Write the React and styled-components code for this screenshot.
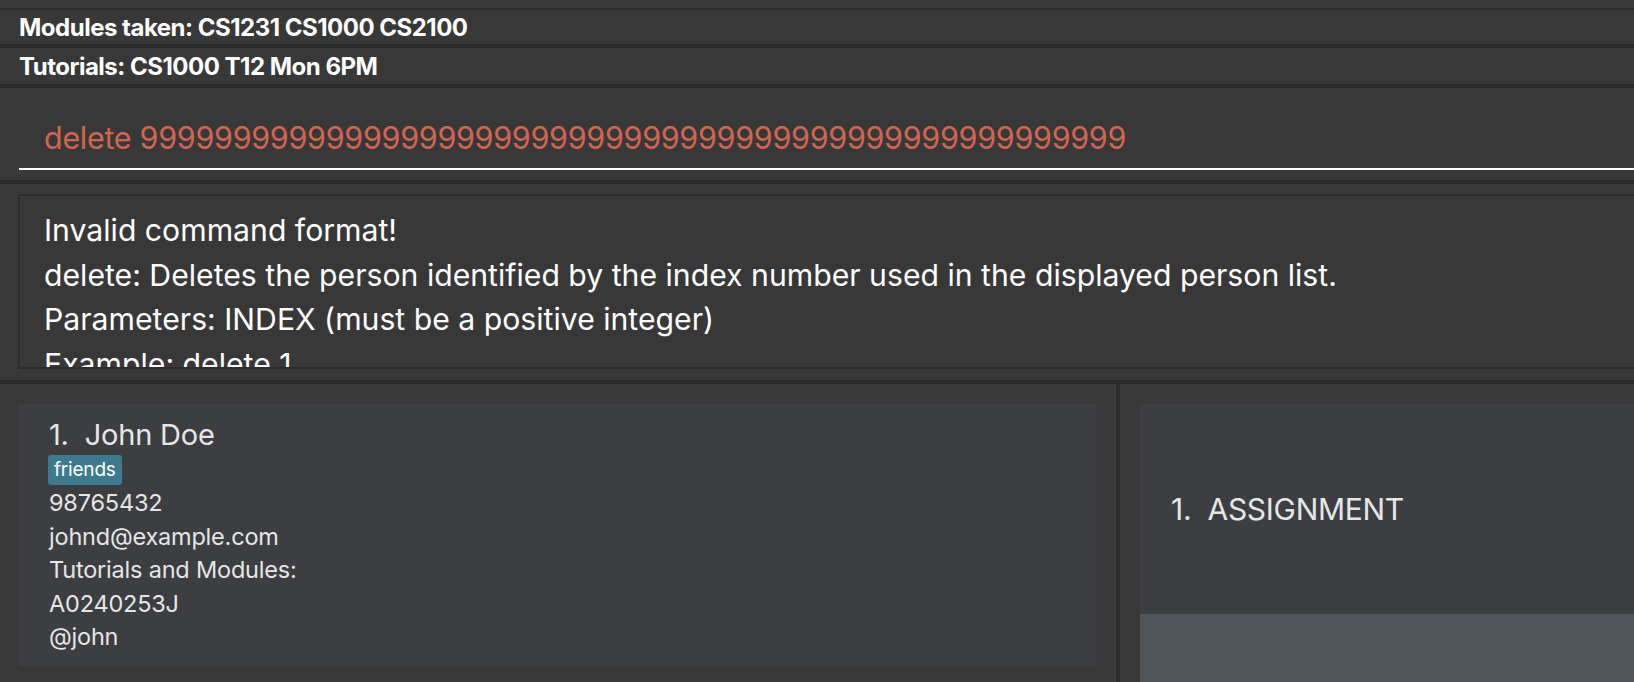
import React from "react";
import styled, { createGlobalStyle } from "styled-components";

const GlobalStyle = createGlobalStyle`
  html, body {
    margin: 0;
    padding: 0;
    background: #383838;
    overflow: hidden;
  }
  body {
    font-family: Inter, "Noto Sans", sans-serif;
  }
`;

const Page = styled.div`
  width: 1634px;
  height: 682px;
  display: flex;
  flex-direction: column;
  background: #383838;
  overflow: hidden;
`;

// thin dark separator between the stacked panes
const Rule = styled.div`
  height: ${(p) => p.size || 4}px;
  background: #2b2b2b;
  flex: none;
`;

const TopStrip = styled.div`
  height: 8px;
  flex: none;
`;

// header rows (modules / tutorials)
const InfoRow = styled.div`
  height: ${(p) => p.h}px;
  display: flex;
  align-items: center;
  padding-left: 19px;
  color: #ffffff;
  font-weight: 700;
  font-size: 24px;
  letter-spacing: -0.5px;
  white-space: nowrap;
  flex: none;
`;

const CommandBox = styled.div`
  height: 92px;
  flex: none;
  display: flex;
  flex-direction: column;
  justify-content: flex-end;
  padding-left: 19px;
`;

const CommandText = styled.div`
  color: #d26550;
  font-size: 30.5px;
  line-height: 36px;
  padding-left: 25px;
  padding-bottom: 12px;
  white-space: nowrap;
  letter-spacing: -0.3px;
`;

const Underline = styled.div`
  height: 2px;
  background: #ffffff;
  margin-bottom: 10px;
`;

const ResultPane = styled.div`
  height: 196px;
  flex: none;
  padding: 10px 0 11px 18px;
  box-sizing: border-box;
`;

const ResultBox = styled.div`
  height: 175px;
  box-sizing: border-box;
  border: 2px solid #2c2c2c;
  border-right: none;
  overflow: hidden;
  padding: 12px 0 0 24px;
  color: #ffffff;
  font-size: 30.2px;
  line-height: 44.5px;
  white-space: nowrap;
`;

const Split = styled.div`
  flex: 1;
  display: flex;
  min-height: 0;
`;

const LeftPane = styled.div`
  width: 1115px;
  flex: none;
  padding: 20px 0 0 18px;
  box-sizing: border-box;
`;

const VDivider = styled.div`
  width: 5px;
  flex: none;
  background: #2b2b2b;
  border-left: 1px solid #3e3e3e;
  box-sizing: border-box;
`;

const RightPane = styled.div`
  flex: 1;
  padding: 20px 0 0 20px;
  display: flex;
  flex-direction: column;
`;

const PersonCard = styled.div`
  width: 1078px;
  height: 262px;
  background: #3c3e41;
  padding: 13px 0 0 31px;
  box-sizing: border-box;
  color: #e6e6e6;
`;

const NameLine = styled.div`
  font-size: 29px;
  line-height: 36px;
  letter-spacing: -0.2px;
`;

const Tag = styled.span`
  display: inline-block;
  background: #3d7a8f;
  color: #ffffff;
  font-size: 19px;
  line-height: 30px;
  padding: 0 6px;
  border-radius: 3px;
  margin: 2px 0 1px -1px;
  letter-spacing: -0.2px;
`;

const Field = styled.div`
  font-size: 23.5px;
  line-height: 33.6px;
  letter-spacing: -0.2px;
`;

const TaskCard = styled.div`
  height: 210px;
  background: #3c3e41;
  display: flex;
  align-items: center;
  padding-left: 31px;
  color: #e6e6e6;
  font-size: 30px;
  letter-spacing: -0.3px;
`;

const TaskFill = styled.div`
  flex: 1;
  background: #50555a;
`;

export default function App() {
  const result = [
    "Invalid command format!",
    "delete: Deletes the person identified by the index number used in the displayed person list.",
    "Parameters: INDEX (must be a positive integer)",
    "Example: delete 1",
  ];
  const command = "delete " + "9".repeat(53);
  return (
    <>
      <GlobalStyle />
      <Page>
        <TopStrip />
        <Rule size={2} />
        <InfoRow h={34}>Modules taken: CS1231 CS1000 CS2100</InfoRow>
        <Rule />
        <InfoRow h={36}>Tutorials: CS1000 T12 Mon 6PM</InfoRow>
        <Rule />
        <CommandBox>
          <CommandText>{command}</CommandText>
          <Underline />
        </CommandBox>
        <Rule />
        <ResultPane>
          <ResultBox>
            {result.map((line) => (
              <div key={line}>{line}</div>
            ))}
          </ResultBox>
        </ResultPane>
        <Rule />
        <Split>
          <LeftPane>
            <PersonCard>
              <NameLine>1.&nbsp;&nbsp;John Doe</NameLine>
              <Tag>friends</Tag>
              <Field>98765432</Field>
              <Field>johnd@example.com</Field>
              <Field>Tutorials and Modules:</Field>
              <Field>A0240253J</Field>
              <Field>@john</Field>
            </PersonCard>
          </LeftPane>
          <VDivider />
          <RightPane>
            <TaskCard>1.&nbsp;&nbsp;ASSIGNMENT</TaskCard>
            <TaskFill />
          </RightPane>
        </Split>
      </Page>
    </>
  );
}
